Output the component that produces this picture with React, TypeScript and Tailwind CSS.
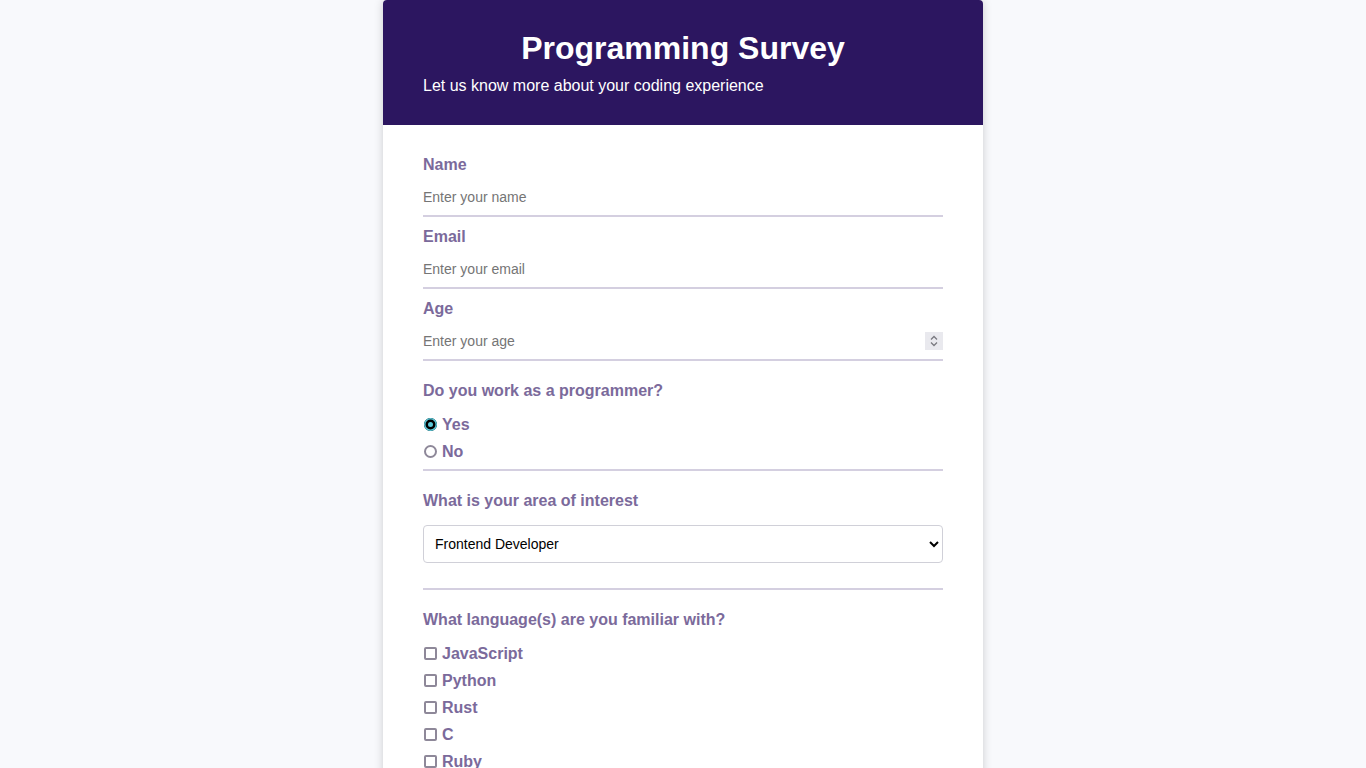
import { useState } from "react";

const languages = ["JavaScript", "Python", "Rust", "C", "Ruby", "Go", "Java"];

function TextField({ label, placeholder, type = "text", spinner }: { label: string; placeholder: string; type?: string; spinner?: boolean }) {
  return (
    <div className="flex flex-col mb-[11px]">
      <label className="text-[16px] leading-[18px] font-bold text-[#7b6a9b]">{label}</label>
      <div className="mt-[7px] h-[36px] flex items-center border-b-2 border-[#d4cfe0]">
        <input
          type={type}
          placeholder={placeholder}
          className="flex-1 h-full min-w-0 pb-[2px] bg-transparent text-[14px] text-black placeholder:text-[#757575] outline-none [appearance:textfield] [&::-webkit-inner-spin-button]:appearance-none [&::-webkit-outer-spin-button]:appearance-none"
        />
        {spinner && (
          <div className="mb-[2px] w-[18px] h-[18px] bg-[#e9e9ee] flex items-center justify-center">
            <svg width="10" height="14" viewBox="0 0 10 14" fill="none" stroke="#7a7a80" strokeWidth="1.3">
              <path d="M2 5.5 L5 2.5 L8 5.5" />
              <path d="M2 8.5 L5 11.5 L8 8.5" />
            </svg>
          </div>
        )}
      </div>
    </div>
  );
}

export default function App() {
  const [worker, setWorker] = useState("yes");
  const [area, setArea] = useState("frontend");

  return (
    <div className="min-h-screen bg-[#f8f9fc] flex justify-center font-['Liberation_Sans',Arial,sans-serif]">
      <div className="w-[600px] bg-white rounded-t-[4px] shadow-[0_0_10px_rgba(0,0,0,0.18)] overflow-hidden">
        <div className="bg-[#2c1660] text-white px-[40px] pt-[30px] pb-[30px]">
          <h1 className="text-center text-[32px] leading-[36px] font-bold">Programming Survey</h1>
          <p className="mt-[11px] text-[16px] leading-[18px]">Let us know more about your coding experience</p>
        </div>

        <form className="flex flex-col px-[40px] pt-[31px] pb-[40px]">
          <TextField label="Name" placeholder="Enter your name" />
          <TextField label="Email" placeholder="Enter your email" type="email" />
          <TextField label="Age" placeholder="Enter your age" type="number" spinner />

          <div className="mt-[10px] border-b-2 border-[#d4cfe0] pb-[4px]">
            <p className="text-[16px] leading-[18px] font-bold text-[#7b6a9b]">Do you work as a programmer?</p>
            <div className="mt-[11px] flex flex-col">
              {[
                ["yes", "Yes"],
                ["no", "No"],
              ].map(([v, t]) => (
                <label key={v} className="h-[27px] flex items-center text-[16px] font-bold text-[#7b6a9b]">
                  <input
                    type="radio"
                    name="worker"
                    checked={worker === v}
                    onChange={() => setWorker(v)}
                    className="appearance-none m-0 ml-[1px] mr-[5px] w-[13px] h-[13px] rounded-full border-2 border-[#8e8899] bg-white checked:border-0 checked:bg-[#5cc8d8] checked:shadow-[inset_0_0_0_1.5px_#5cc8d8,inset_0_0_0_4px_#000]"
                  />
                  {t}
                </label>
              ))}
            </div>
          </div>

          <div className="mt-[21px] border-b-2 border-[#d4cfe0] pb-[25px]">
            <p className="text-[16px] leading-[18px] font-bold text-[#7b6a9b]">What is your area of interest</p>
            <select
              value={area}
              onChange={(e) => setArea(e.target.value)}
              className="mt-[15px] w-full h-[38px] border border-[#d0d0d8] rounded-[4px] bg-white px-[7px] text-[14px] text-black outline-none"
            >
              <option value="frontend">Frontend Developer</option>
              <option value="backend">Backend Developer</option>
              <option value="fullstack">Full Stack Developer</option>
              <option value="mobile">Mobile Developer</option>
            </select>
          </div>

          <div className="mt-[21px]">
            <p className="text-[16px] leading-[18px] font-bold text-[#7b6a9b]">What language(s) are you familiar with?</p>
            <div className="mt-[11px] flex flex-col">
              {languages.map((l) => (
                <label key={l} className="h-[27px] flex items-center text-[16px] font-bold text-[#7b6a9b]">
                  <input
                    type="checkbox"
                    className="appearance-none m-0 ml-[1px] mr-[5px] w-[13px] h-[13px] border-2 border-[#8e8899] rounded-[2px] bg-white"
                  />
                  {l}
                </label>
              ))}
            </div>
          </div>

          <div className="mt-[20px]">
            <p className="text-[16px] leading-[18px] font-bold text-[#7b6a9b]">Any comments or suggestions?</p>
            <textarea
              placeholder="Enter your comment here..."
              className="mt-[11px] w-full h-[100px] border border-[#d0d0d8] rounded-[4px] p-[10px] text-[14px] outline-none"
            />
          </div>

          <button type="button" className="mt-[20px] w-full h-[44px] rounded-[4px] bg-[#2c1660] text-white font-bold text-[16px]">
            Submit
          </button>
        </form>
      </div>
    </div>
  );
}
